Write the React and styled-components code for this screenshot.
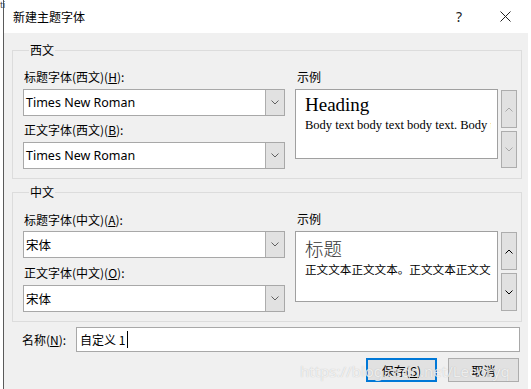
import React from "react";
import styled, { createGlobalStyle } from "styled-components";

const GlobalStyle = createGlobalStyle`
  html, body {
    margin: 0;
    padding: 0;
    background: #ffffff;
  }
  body {
    font-family: "Noto Sans CJK SC", "Noto Sans", sans-serif;
    font-size: 12px;
    color: #000;
  }
`;

const Page = styled.div`
  display: flex;
  width: 531px;
  height: 389px;
  overflow: hidden;
  position: relative;
`;

const Strip = styled.div`
  width: 3px;
  border-right: 1px solid #5a5a5a;
  background: #fff;
  position: relative;
`;

const StripMark = styled.span`
  position: absolute;
  top: 0;
  left: 0;
  font-size: 8px;
  line-height: 10px;
  color: #333;
`;

const Dialog = styled.div`
  width: 524px;
  display: flex;
  flex-direction: column;
  background: #f0f0f0;
`;

const TitleBar = styled.div`
  height: 33px;
  background: #fff;
  display: flex;
  align-items: center;
  padding-left: 9px;
`;

const Title = styled.div`
  flex: 1;
  font-size: 12px;
  line-height: 16px;
`;

const TitleButton = styled.div`
  width: 46px;
  display: flex;
  justify-content: center;
  align-items: center;
  font-family: "Noto Sans", sans-serif;
  font-size: 14px;
  color: #222;
`;

const Body = styled.div`
  flex: 1;
  padding: 0 6px 0 8px;
  display: flex;
  flex-direction: column;
`;

const Group = styled.fieldset`
  margin: ${({ top }) => top}px 0 0 0;
  padding: 0 3px ${({ bottom }) => bottom}px 10px;
  border: 1px solid #dcdcdc;
  display: flex;
  gap: 10px;
`;

const Legend = styled.legend`
  padding: 0 1px;
  margin-left: 6px;
  font-size: 12px;
  line-height: 16px;
`;

const LeftCol = styled.div`
  width: 262px;
  display: flex;
  flex-direction: column;
  padding-top: ${({ top }) => top}px;
`;

const RightCol = styled.div`
  flex: 1;
  display: flex;
  flex-direction: column;
  padding-top: ${({ top }) => top}px;
`;

const Label = styled.div`
  font-size: 12px;
  line-height: 16px;
  margin-bottom: ${({ mb }) => mb}px;
  margin-top: ${({ mt }) => mt || 0}px;
  padding-left: ${({ pl }) => pl || 1}px;
`;

const Combo = styled.div`
  height: 27px;
  box-sizing: border-box;
  border: 1px solid #a8a8a8;
  background: #fff;
  display: flex;
`;

const ComboText = styled.div`
  flex: 1;
  display: flex;
  align-items: center;
  padding-left: 2px;
  font-family: "Noto Sans", "Noto Sans CJK SC", sans-serif;
  font-size: 12.5px;
`;

const ComboButton = styled.div`
  width: 18px;
  background: #e1e1e1;
  border-left: 1px solid #adadad;
  display: flex;
  align-items: center;
  justify-content: center;
`;

const PreviewRow = styled.div`
  display: flex;
  gap: 3px;
`;

const Preview = styled.div`
  width: 203px;
  height: ${({ h }) => h}px;
  box-sizing: border-box;
  border: 1px solid #a0a0a0;
  background: #fff;
  padding: 4px 0 0 9px;
`;

const Clip = styled.div`
  width: ${({ w }) => w}px;
  overflow: hidden;
  white-space: nowrap;
`;

const HeadingSample = styled.div`
  font-family: "Liberation Serif", serif;
  font-size: 19px;
  line-height: 22px;
`;

const BodySample = styled.div`
  font-family: "Liberation Serif", serif;
  font-size: 12.5px;
  line-height: 16px;
  margin-top: 1px;
`;

const CnHeading = styled.div`
  font-family: "Noto Sans CJK SC", sans-serif;
  font-weight: 300;
  font-size: 18.5px;
  line-height: 24px;
  color: #333;
`;

const CnBody = styled.div`
  font-family: "Noto Sans CJK SC", sans-serif;
  font-size: 11.6px;
  line-height: 16px;
  margin-top: 1px;
`;

const Spin = styled.div`
  width: 16px;
  display: flex;
  flex-direction: column;
  gap: 3px;
  padding-top: 1px;
`;

const SpinButton = styled.div`
  height: ${({ h }) => h}px;
  box-sizing: border-box;
  background: #e1e1e1;
  border: 1px solid #adadad;
  display: flex;
  align-items: center;
  justify-content: center;
`;

const NameRow = styled.div`
  display: flex;
  align-items: center;
  margin-top: 5px;
  padding: 0 2px 0 10px;
`;

const NameLabel = styled.div`
  width: 54px;
  font-size: 12px;
  line-height: 16px;
`;

const NameInput = styled.div`
  flex: 1;
  height: 25px;
  box-sizing: border-box;
  border: 1px solid #a8a8a8;
  background: #fff;
  display: flex;
  align-items: center;
  padding-left: 3px;
  font-size: 12px;
`;

const Caret = styled.span`
  display: inline-block;
  width: 1px;
  height: 17px;
  background: #000;
  margin-left: 2px;
`;

const ButtonRow = styled.div`
  display: flex;
  justify-content: flex-end;
  gap: 11px;
  margin-top: 6px;
  padding-right: 3px;
`;

const Button = styled.div`
  width: 71px;
  height: 24px;
  box-sizing: border-box;
  border: ${({ primary }) => (primary ? "2px solid #0078d7" : "1px solid #adadad")};
  background: #e1e1e1;
  display: flex;
  align-items: center;
  justify-content: center;
  font-size: 12px;
`;

const Watermark = styled.div`
  position: absolute;
  left: 300px;
  top: 361px;
  font-family: "Noto Sans", sans-serif;
  font-size: 15px;
  color: rgba(255, 255, 255, 0.75);
  text-shadow: 0 0 1px rgba(120, 120, 120, 0.45);
  pointer-events: none;
  white-space: nowrap;
`;

const Chevron = ({ up, color = "#606060", w = 8 }) => (
  <svg width={w} height={w / 2 + 1} viewBox="0 0 8 5">
    <polyline
      points={up ? "0.5,4.5 4,1 7.5,4.5" : "0.5,0.5 4,4 7.5,0.5"}
      fill="none"
      stroke={color}
      strokeWidth="1"
    />
  </svg>
);

const CloseIcon = () => (
  <svg width="11" height="11" viewBox="0 0 11 11">
    <path d="M0.5 0.5 L10.5 10.5 M10.5 0.5 L0.5 10.5" stroke="#222" strokeWidth="1" fill="none" />
  </svg>
);

const FontCombo = ({ value }) => (
  <Combo>
    <ComboText>{value}</ComboText>
    <ComboButton>
      <Chevron />
    </ComboButton>
  </Combo>
);

const U = styled.span`
  text-decoration: underline;
  text-underline-offset: 1px;
`;

export default function App() {
  return (
    <>
      <GlobalStyle />
      <Page>
        <Strip>
          <StripMark>ti</StripMark>
        </Strip>
        <Dialog>
          <TitleBar>
            <Title>新建主题字体</Title>
            <TitleButton>?</TitleButton>
            <TitleButton>
              <CloseIcon />
            </TitleButton>
          </TitleBar>
          <Body>
            <Group top={9} bottom={9}>
              <Legend>西文</Legend>
              <LeftCol top={11}>
                <Label mb={4}>
                  标题字体(西文)(<U>H</U>):
                </Label>
                <FontCombo value="Times New Roman" />
                <Label mt={6} mb={4}>
                  正文字体(西文)(<U>B</U>):
                </Label>
                <FontCombo value="Times New Roman" />
              </LeftCol>
              <RightCol top={11}>
                <Label mb={4} pl={2}>
                  示例
                </Label>
                <PreviewRow>
                  <Preview h={70}>
                    <Clip w={186}>
                      <HeadingSample>Heading</HeadingSample>
                      <BodySample>Body text body text body text. Body text</BodySample>
                    </Clip>
                  </Preview>
                  <Spin>
                    <SpinButton h={38}>
                      <Chevron up color="#a8a8a8" />
                    </SpinButton>
                    <SpinButton h={37}>
                      <Chevron color="#a8a8a8" />
                    </SpinButton>
                  </Spin>
                </PreviewRow>
              </RightCol>
            </Group>
            <Group top={5} bottom={9}>
              <Legend>中文</Legend>
              <LeftCol top={12}>
                <Label mb={3}>
                  标题字体(中文)(<U>A</U>):
                </Label>
                <FontCombo value="宋体" />
                <Label mt={7} mb={4}>
                  正文字体(中文)(<U>O</U>):
                </Label>
                <FontCombo value="宋体" />
              </LeftCol>
              <RightCol top={11}>
                <Label mb={4} pl={2}>
                  示例
                </Label>
                <PreviewRow>
                  <Preview h={71}>
                    <Clip w={186}>
                      <CnHeading>标题</CnHeading>
                      <CnBody>正文文本正文文本。正文文本正文文本。</CnBody>
                    </Clip>
                  </Preview>
                  <Spin>
                    <SpinButton h={38}>
                      <Chevron up color="#000" />
                    </SpinButton>
                    <SpinButton h={38}>
                      <Chevron color="#000" />
                    </SpinButton>
                  </Spin>
                </PreviewRow>
              </RightCol>
            </Group>
            <NameRow>
              <NameLabel>
                名称(<U>N</U>):
              </NameLabel>
              <NameInput>
                自定义 1<Caret />
              </NameInput>
            </NameRow>
            <ButtonRow>
              <Button primary>
                保存(<U>S</U>)
              </Button>
              <Button>取消</Button>
            </ButtonRow>
          </Body>
        </Dialog>
        <Watermark>https://blog.csdn.net/Leeoryq</Watermark>
      </Page>
    </>
  );
}
